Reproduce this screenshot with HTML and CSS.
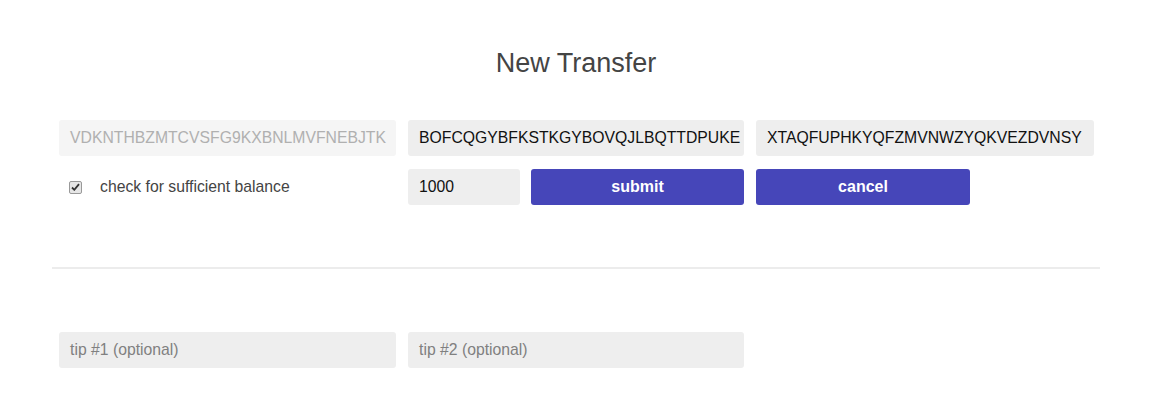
FILE: index.html
```html
<!DOCTYPE html>
<html>
<head>
<meta charset="utf-8">
<link rel="stylesheet" href="styles.css">
</head>
<body>
<div class="page">
  <h1 class="title">New Transfer</h1>
  <div class="form">
    <div class="field disabled">VDKNTHBZMTCVSFG9KXBNLMVFNEBJTK</div>
    <div class="field">BOFCQGYBFKSTKGYBOVQJLBQTTDPUKE</div>
    <div class="field">XTAQFUPHKYQFZMVNWZYQKVEZDVNSY</div>
    <label class="check">
      <span class="box"><svg width="9" height="8" viewBox="0 0 9 8"><path d="M1 4.5 L3.3 6.8 L8 1.2" fill="none" stroke="#333" stroke-width="1.8"/></svg></span>
      <span>check for sufficient balance</span>
    </label>
    <div class="pair">
      <div class="field amount">1000</div>
      <button class="btn">submit</button>
    </div>
    <div class="pair">
      <button class="btn cancel">cancel</button>
    </div>
  </div>
  <hr class="divider">
  <div class="form tips">
    <div class="field placeholder">tip #1 (optional)</div>
    <div class="field placeholder">tip #2 (optional)</div>
  </div>
</div>
</body>
</html>
```
FILE: styles.css
```css
html, body {
  margin: 0;
  padding: 0;
  background: #fff;
  font-family: "Liberation Sans", Arial, sans-serif;
}
.page {
  padding: 46px 50px 0 52px;
}
.title {
  margin: 0;
  text-align: center;
  font-size: 27px;
  font-weight: normal;
  color: #444;
  line-height: 34px;
}
.form {
  display: grid;
  grid-template-columns: 337px 336px 338px;
  column-gap: 12px;
  row-gap: 13px;
  margin: 40px 0 0 7px;
}
.field {
  height: 36px;
  box-sizing: border-box;
  background: #eeeeee;
  border-radius: 3px;
  padding: 0 10px 0 11px;
  font-size: 15.75px;
  line-height: 36px;
  color: #111;
  white-space: nowrap;
  overflow: hidden;
}
.field.disabled {
  background: #f5f5f5;
  color: #b0b0b0;
}
.field.placeholder {
  color: #808080;
}
.check {
  display: flex;
  align-items: center;
  height: 36px;
  padding-left: 10px;
  gap: 18px;
  font-size: 15.75px;
  color: #444;
}
.box {
  width: 11px;
  height: 11px;
  border: 1px solid #999;
  border-radius: 2px;
  background: #e6e6e6;
  display: flex;
  align-items: center;
  justify-content: center;
}
.pair {
  display: flex;
  gap: 11px;
}
.amount {
  width: 112px;
  flex: none;
}
.btn {
  width: 214px;
  height: 36px;
  border: none;
  border-radius: 3px;
  background: #4646b9;
  color: #fff;
  font-family: "Liberation Sans", Arial, sans-serif;
  font-weight: bold;
  font-size: 16px;
  padding: 0;
}
.divider {
  border: none;
  border-top: 2px solid #ececec;
  margin: 62px 0 0 0;
}
.tips {
  margin-top: 63px;
}
```
